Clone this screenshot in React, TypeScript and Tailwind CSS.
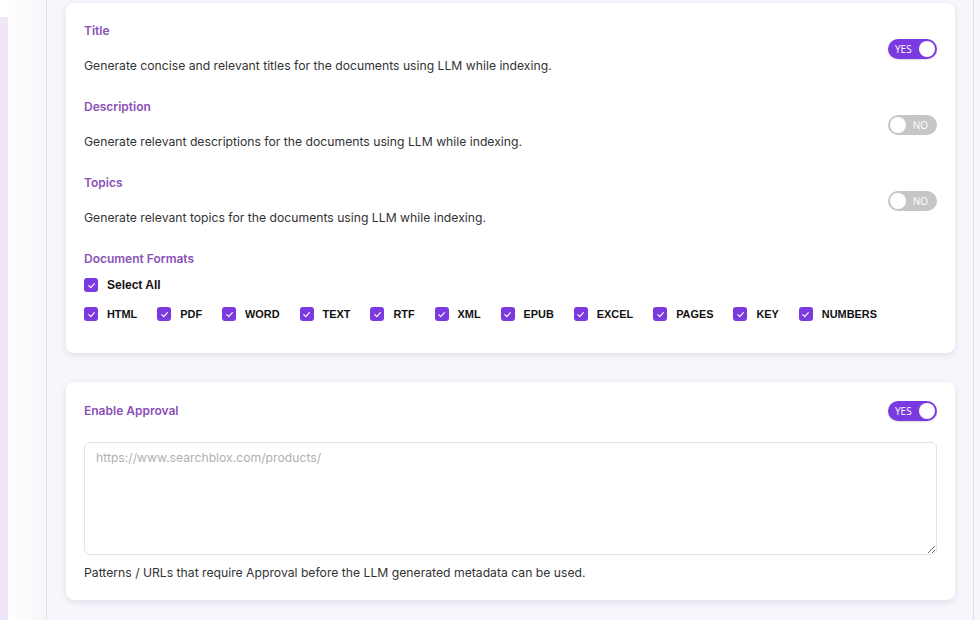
import React from "react";

function Toggle({ on }: { on: boolean }) {
  if (on) {
    return (
      <div className="flex h-[20px] w-[49px] items-center justify-between rounded-full bg-[#7b3ae0] pl-[7px] pr-[2px] shadow-[0_1px_2px_rgba(0,0,0,0.15)]">
        <span className="text-[10px] leading-none text-white" style={{ fontFamily: '"Open Sans", sans-serif' }}>YES</span>
        <span className="h-[16px] w-[16px] rounded-full bg-white" />
      </div>
    );
  }
  return (
    <div className="flex h-[20px] w-[49px] items-center justify-between rounded-full bg-[#c6c6c6] pl-[2px] pr-[9px]">
      <span className="h-[16px] w-[16px] rounded-full bg-white" />
      <span className="text-[10px] leading-none text-white" style={{ fontFamily: '"Open Sans", sans-serif' }}>NO</span>
    </div>
  );
}

function Check() {
  return (
    <span className="flex h-[14px] w-[14px] shrink-0 items-center justify-center rounded-[3px] bg-[#7b3ae0]">
      <svg width="9" height="9" viewBox="0 0 10 10" fill="none">
        <path d="M2 5.2 L4.2 7.3 L8.2 3" stroke="white" strokeWidth="1.3" strokeLinecap="round" strokeLinejoin="round" />
      </svg>
    </span>
  );
}

const formats = ["HTML", "PDF", "WORD", "TEXT", "RTF", "XML", "EPUB", "EXCEL", "PAGES", "KEY", "NUMBERS"];

function Setting({ title, desc, on }: { title: string; desc: string; on: boolean }) {
  return (
    <div className="flex items-center justify-between">
      <div className="flex flex-col">
        <div className="h-[20px] text-[12px] font-semibold leading-[20px] text-[#8a50b6]">{title}</div>
        <div className="mt-[15px] h-[20px] text-[12.2px] leading-[20px] text-[#333333]">{desc}</div>
      </div>
      <Toggle on={on} />
    </div>
  );
}

export default function App() {
  return (
    <div className="flex h-[620px] w-[980px] overflow-hidden bg-[#f8f6fc]" style={{ fontFamily: 'Inter, "Noto Sans", sans-serif' }}>
      <div className="flex w-[8px] flex-col">
        <div className="h-[17px] bg-white" />
        <div className="flex-1 bg-[#efe7f8]" />
      </div>
      <div className="w-[39px] border-r border-[#e2dfe8] bg-gradient-to-r from-white to-[#f6f5f8]" />
      <div className="flex flex-1 flex-col gap-[29px] pl-[19px] pr-[18px] pt-[3px]">
        <div className="rounded-[8px] bg-white px-[18px] pb-[31px] pt-[18px] shadow-[0_2px_6px_rgba(60,40,100,0.12)]">
          <div className="flex flex-col gap-[21px]">
            <Setting title="Title" desc="Generate concise and relevant titles for the documents using LLM while indexing." on={true} />
            <Setting title="Description" desc="Generate relevant descriptions for the documents using LLM while indexing." on={false} />
            <Setting title="Topics" desc="Generate relevant topics for the documents using LLM while indexing." on={false} />
          </div>
          <div className="mt-[21px] h-[20px] text-[12px] font-semibold leading-[20px] text-[#8a50b6]">Document Formats</div>
          <div className="mt-[7px] flex items-center gap-[9px]" style={{ fontFamily: '"Liberation Sans", Arial, sans-serif' }}>
            <Check />
            <span className="text-[12px] font-bold text-[#111]">Select All</span>
          </div>
          <div className="mt-[12px] flex items-center gap-[20px]" style={{ fontFamily: '"Liberation Sans", Arial, sans-serif' }}>
            {formats.map((f) => (
              <div key={f} className="flex items-center gap-[9px]">
                <Check />
                <span className="text-[10.9px] font-bold text-[#111]">{f}</span>
              </div>
            ))}
          </div>
        </div>
        <div className="rounded-[8px] bg-white px-[18px] pb-[17px] pt-[19px] shadow-[0_2px_6px_rgba(60,40,100,0.12)]">
          <div className="flex items-center justify-between">
            <div className="text-[12px] font-semibold text-[#8a50b6]">Enable Approval</div>
            <Toggle on={true} />
          </div>
          <textarea
            className="mt-[21px] block h-[113px] w-full resize-y rounded-[6px] border border-[#e3e3e3] px-[11px] py-[6px] text-[12.2px] text-[#333] outline-none placeholder:text-[#b0b0b0]"
            placeholder="https://www.searchblox.com/products/"
          />
          <div className="mt-[8px] text-[12.2px] leading-[20px] text-[#333333]">
            Patterns / URLs that require Approval before the LLM generated metadata can be used.
          </div>
        </div>
      </div>
      <div className="w-[7px] border-l border-[#e2dfe8] bg-[#f8f7fb]" />
    </div>
  );
}
